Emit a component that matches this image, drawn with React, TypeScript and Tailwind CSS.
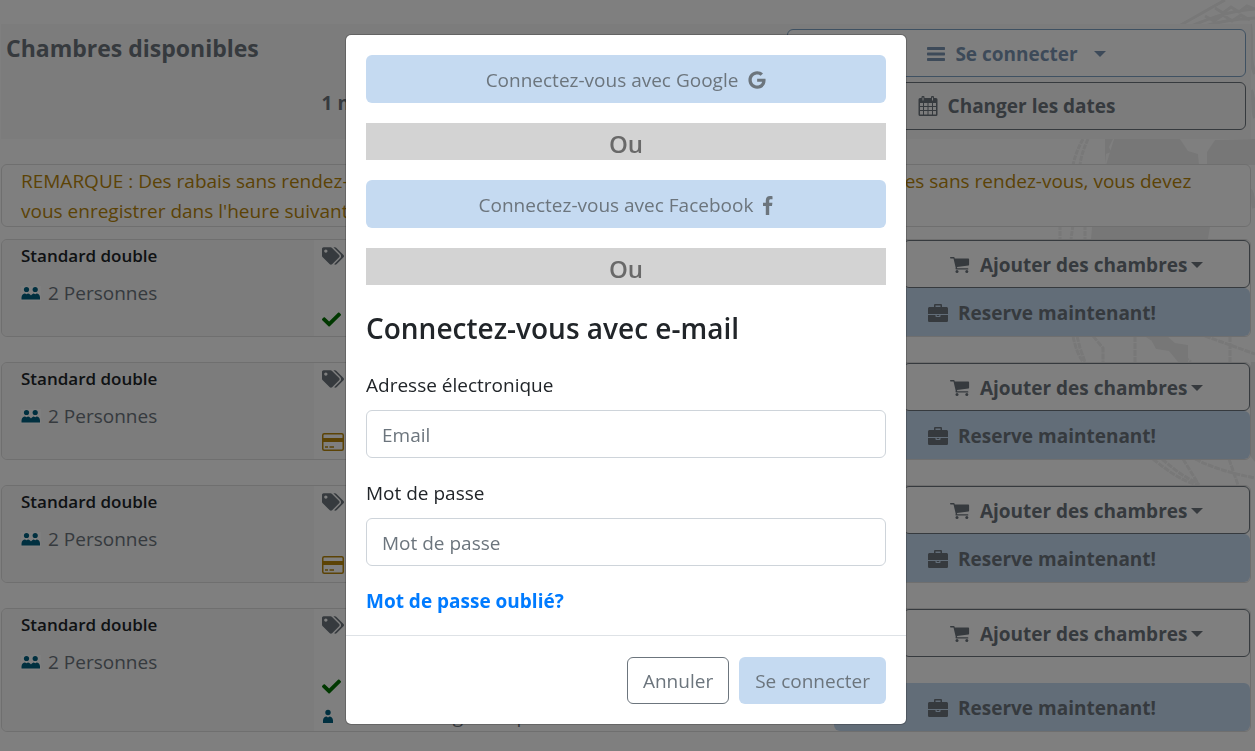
import { useState } from "react";
import type { ReactNode } from "react";
import { FaCheck, FaGoogle, FaTags } from "react-icons/fa";

type Room = {
  id: number;
  name: string;
  guests: number;
  policy: "free" | "card";
  note?: string;
};

const rooms: Room[] = [
  { id: 1, name: "Standard double", guests: 2, policy: "free" },
  { id: 2, name: "Standard double", guests: 2, policy: "card" },
  { id: 3, name: "Standard double", guests: 2, policy: "card" },
  { id: 4, name: "Standard double", guests: 2, policy: "free", note: "Lit d'enfant gratuit pour 1" },
];

export default function App() {
  return (
    <div className="relative min-h-screen overflow-hidden bg-white font-['Open_Sans','Noto_Sans',sans-serif] text-[19px] leading-[30px] text-[#212529]">
      <MapBackground />
      <main className="relative pt-6 pr-1 pb-5 pl-px">
        <PageHeader />
        <p className="mt-[25px] mb-3 rounded-md border border-[#dfdfdf] bg-white px-[19px] pt-px text-[#b8860b]">
          REMARQUE : Des rabais sans rendez-vous sont parfois offerts à la réception. Pour profiter des remises sans
          rendez-vous, vous devez vous enregistrer dans l'heure suivant la réservation.
        </p>
        <div className="flex flex-col gap-[25px]">
          {rooms.map((room) => (
            <RoomCard key={room.id} room={room} />
          ))}
        </div>
      </main>
      <LoginModal />
    </div>
  );
}

function PageHeader() {
  return (
    <header className="flex justify-between bg-[#f8f8f8] px-[5px] pt-[5px] pb-[9px] font-bold text-[#6c757d]">
      <div className="flex w-[686px] flex-col gap-[25px]">
        <h1 className="pt-1 text-[23px] leading-[30px]">Chambres disponibles</h1>
        <p className="text-center">1 nuit</p>
      </div>
      <div className="flex w-[459px] shrink-0 flex-col gap-[5px]">
        <button className="flex h-12 items-center justify-center rounded-md border border-[#7fa3c4] bg-white pt-0.5 text-[#7b95b3]">
          <BarsIcon className="mr-2.5 h-4 w-[18px]" />
          Se connecter
          <Caret className="ml-4" />
        </button>
        <button className="flex h-12 items-center justify-center rounded-md border border-[#6c757d]">
          <CalendarIcon className="mr-2.5 h-5 w-5" />
          Changer les dates
        </button>
      </div>
    </header>
  );
}

function RoomCard({ room }: { room: Room }) {
  return (
    <article className="grid grid-cols-12 rounded-md border border-[#dfdfdf] bg-white">
      <div className="col-span-3 rounded-l-md bg-[#f8f8f8] px-[19px] pt-px">
        <h2 className="text-[17px] leading-[30px] font-semibold">{room.name}</h2>
        <p className="mt-[7px] flex items-center gap-[7px] text-[#6c757d]">
          <PeopleIcon className="h-[15px] w-5" />
          {room.guests} Personnes
        </p>
      </div>
      <div className="col-span-5 flex flex-col justify-between px-2 pt-[5px]">
        <FaTags className="size-[22px] text-[#6c757d]" />
        <div>
          <div className="flex h-[34px] items-center">
            {room.policy === "free" ? (
              <FaCheck className="size-[19px] text-[#007000]" />
            ) : (
              <CardIcon className="h-[18px] w-[22px] text-[#b8860b]" />
            )}
          </div>
          {room.note && (
            <p className="flex h-7 items-center gap-3.5 pb-0.5 text-[#6c757d]">
              <PersonIcon className="h-[15px] w-3" />
              {room.note}
            </p>
          )}
        </div>
      </div>
      <div className="col-span-4 flex flex-col justify-between font-bold text-[#6c757d]">
        <button className="ml-auto flex h-12 w-5/6 items-center justify-center rounded-md border border-[#6c757d] bg-white pt-0.5">
          <CartIcon className="mr-2.5 h-4 w-5" />
          Ajouter des chambres
          <Caret className="ml-1" />
        </button>
        {room.note && <div className="h-[26px]" />}
        <button className="flex h-12 w-full items-center justify-center rounded-md bg-[#c5daf1] pt-0.5">
          <BriefcaseIcon className="mr-2.5 h-[18px] w-5" />
          Reserve maintenant!
        </button>
      </div>
    </article>
  );
}

function LoginModal() {
  const [email, setEmail] = useState("");
  const [password, setPassword] = useState("");

  return (
    <div className="fixed inset-0 flex items-start justify-center bg-black/50 pt-[34px] pr-[3px]">
      <div
        role="dialog"
        aria-modal="true"
        aria-labelledby="login-title"
        className="w-full max-w-[562px] rounded-md border border-black/20 bg-white bg-clip-padding"
      >
        <div className="px-5 pt-5 pb-[19px]">
          <SocialButton icon={<GoogleMark />}>Connectez-vous avec Google</SocialButton>
          <Divider />
          <SocialButton icon={<FacebookMark />}>Connectez-vous avec Facebook</SocialButton>
          <Divider />

          <h2 id="login-title" className="mb-6 pt-[5px] text-[28px] leading-9 font-semibold">
            Connectez-vous avec e-mail
          </h2>
          <label htmlFor="email" className="mb-2.5 block">
            Adresse électronique
          </label>
          <input
            id="email"
            type="email"
            placeholder="Email"
            value={email}
            onChange={(e) => setEmail(e.target.value)}
            className="mb-5 block h-12 w-full rounded-md border border-[#ced4da] px-[15px] pt-0.5 placeholder:text-[#6c757d]"
          />
          <label htmlFor="password" className="mb-2.5 block">
            Mot de passe
          </label>
          <input
            id="password"
            type="password"
            placeholder="Mot de passe"
            value={password}
            onChange={(e) => setPassword(e.target.value)}
            className="mb-5 block h-12 w-full rounded-md border border-[#ced4da] px-[15px] pt-0.5 placeholder:text-[#6c757d]"
          />
          <a href="#forgot" className="font-bold text-[#007bff]">
            Mot de passe oublié?
          </a>
        </div>
        <div className="flex justify-end gap-2.5 border-t border-[#dee2e6] px-5 pt-[21px] pb-5 text-[#6c757d]">
          <button className="h-[47px] rounded-md border border-[#6c757d] px-[15px]">Annuler</button>
          <button className="h-[47px] rounded-md bg-[#c5daf1] px-4">Se connecter</button>
        </div>
      </div>
    </div>
  );
}

function SocialButton({ icon, children }: { icon: ReactNode; children: ReactNode }) {
  return (
    <button className="flex h-12 w-full items-center justify-center gap-2.5 rounded-md bg-[#c5daf1] pt-0.5 text-[#6c757d]">
      {children}
      {icon}
    </button>
  );
}

function Divider() {
  return (
    <div className="my-5 bg-[#d3d3d3] pt-1 text-center text-[24px] leading-[33px] font-semibold text-[#696969]">Ou</div>
  );
}

/* Icons */

type IconProps = { className?: string };

function GoogleMark() {
  return <FaGoogle className="size-[18px]" aria-hidden="true" />;
}

function FacebookMark() {
  return (
    <svg viewBox="0 0 10 19" className="h-[19px] w-2.5" fill="currentColor" aria-hidden="true">
      <path d="M9.500.2v3H7.800C6.500 3.200 6.200 3.800 6.200 4.700v2h3.200l-.4 3.300H6.200V19H2.800v-9H0V6.700h2.800V4.300C2.800 1.500 4.500 0 7 0c1.200 0 2.200.1 2.500.2z" />
    </svg>
  );
}

function BarsIcon({ className }: IconProps) {
  return (
    <svg viewBox="0 0 18 16" className={className} fill="currentColor" aria-hidden="true">
      <rect y="1" width="18" height="3" rx=".7" />
      <rect y="6.500" width="18" height="3" rx=".7" />
      <rect y="12" width="18" height="3" rx=".7" />
    </svg>
  );
}

function CartIcon({ className }: IconProps) {
  return (
    <svg viewBox="0 0 20 16" className={className} fill="currentColor" aria-hidden="true">
      <path d="M.7 0h3c.5 0 .8.300.9.800L4.800 1.500H18.400c.4 0 .7.300.7.700v5.600c0 .4-.3.700-.6.700L7 9.900l.2 1.300h10.500a.7.7 0 0 1 0 1.400H6.200a.7.7 0 0 1-.7-.8l.2-1.100L3.500 1.400H.7A.7.7 0 0 1 .7 0z" />
      <circle cx="7" cy="14.400" r="1.500" />
      <circle cx="16.800" cy="14.400" r="1.500" />
    </svg>
  );
}

function BriefcaseIcon({ className }: IconProps) {
  return (
    <svg viewBox="0 0 20 18" className={className} fill="currentColor" aria-hidden="true">
      <path
        fillRule="evenodd"
        d="M6 3V1.200C6 .500 6.500 0 7.200 0h5.600c.7 0 1.200.5 1.200 1.200V3h4.400C19.300 3 20 3.700 20 4.600V10H0V4.600C0 3.700.7 3 1.600 3zm1.500 0h5V1.400h-5z"
      />
      <path d="M0 11h7.500v1.200c0 .5.300.8.800.8h3.400c.5 0 .8-.3.800-.8V11H20v5.400c0 .9-.7 1.600-1.600 1.600H1.600C.7 18 0 17.300 0 16.400z" />
      <path d="M8.700 11h2.600v1H8.700z" />
    </svg>
  );
}

function Caret({ className = "" }: IconProps) {
  return (
    <svg viewBox="0 0 12 6" className={`h-1.5 w-3 ${className}`} fill="currentColor" aria-hidden="true">
      <path d="M0 0h12L6 6z" />
    </svg>
  );
}

function CalendarIcon({ className }: IconProps) {
  return (
    <svg viewBox="0 0 20 20" className={className} fill="currentColor" aria-hidden="true">
      <path
        fillRule="evenodd"
        d="M2 2h1.500V1a1 1 0 0 1 1-1h1a1 1 0 0 1 1 1v1h6.500V1a1 1 0 0 1 1-1h1a1 1 0 0 1 1 1v1H18a1.500 1.500 0 0 1 1.500 1.500v15A1.500 1.500 0 0 1 18 20H2a1.500 1.500 0 0 1-1.500-1.500v-15A1.500 1.500 0 0 1 2 2zM2 7v3h3V7zm4 0v3h3.500V7zm4.500 0v3H14V7zM15 7v3h3V7zM2 11v3h3v-3zm4 0v3h3.500v-3zm4.500 0v3H14v-3zm4.500 0v3h3v-3zM2 15v3.500h3V15zm4 0v3.500h3.500V15zm4.500 0v3.500H14V15zm4.500 0v3.500h3V15zM4.500 1.500v3h1v-3zm9.500 0v3h1v-3z"
      />
    </svg>
  );
}

function CardIcon({ className }: IconProps) {
  return (
    <svg viewBox="0 0 22 18" className={className} fill="none" stroke="currentColor" aria-hidden="true">
      <rect x=".75" y=".75" width="20.500" height="16.500" rx="1.500" strokeWidth="1.500" />
      <path d="M1 7h20" strokeWidth="4" />
      <path d="M3 14h3m1.500 0H12" strokeWidth="1.500" />
    </svg>
  );
}

function PersonIcon({ className }: IconProps) {
  return (
    <svg viewBox="0 0 12 15" className={className} fill="#006080" aria-hidden="true">
      <circle cx="6" cy="3.500" r="2.700" />
      <path d="M1 14v-2.500C1 9 3 7.500 4.500 7.500L6 8.500l1.500-1C9 7.500 11 9 11 11.500V14z" />
    </svg>
  );
}

function PeopleIcon({ className }: IconProps) {
  return (
    <svg viewBox="0 0 20 15" className={className} fill="#006080" aria-hidden="true">
      <rect width="20" height="15" fill="#fff" />
      <circle cx="5.500" cy="3.500" r="2.600" />
      <circle cx="14.200" cy="3.500" r="2.600" />
      <path d="M.5 13.500V11.500c0-2.500 2-4 3.500-4l1.500.7 1.500-.7c1.300 0 2.300 1 3 2 .7-1 1.700-2 2.700-2l1.500.7 1.500-.7c1.500 0 3.300 1.500 3.300 4v2z" />
    </svg>
  );
}

/* Faded world map behind the list */
function MapBackground() {
  return (
    <svg
      viewBox="0 0 200 500"
      className="absolute top-0 right-0 h-[500px] w-[200px]"
      fill="none"
      stroke="#f0f0f0"
      strokeWidth="3"
      aria-hidden="true"
    >
      <path d="M124 26 170 0M136 26c18-7 32-14 64-17M150 26c16-5 30-7 50-8M160 8l8 5 8-6 8 5 8-6 8 3M150 16l9 5 9-6 9 6 9-6 9 5" />
      <path d="M50 139h8l-4 8 2 5-5 2-1 11zM59 139h66l8 12 10 3 1 11h8v-13l8-12 40-1v26H51zM37 227h118l-2 12H36z" fill="#efefef" stroke="none" />
      <path d="M28 139c-5 9-8 17-10 26M33 139c-4 9-7 17-8 26M5 225v14M18 225l-2 14M30 225v14" strokeDasharray="5 1" />
      <path d="M195 24c3 20-2 35 5 50M196 90c4 9 1 20 4 28M195 190c4 5 2 12 4 18" strokeWidth="4" />
      <path d="M18 336c2 10 5 19 10 26M22 336l3 12 5 14M38 336l10 12v14M80 336v26M92 336c18 12 34 18 44 26M150 336l50 18M175 336v26" strokeDasharray="6 1" />
      <path d="M94 336h18l8 7 13 2v17h-10l-9-11-13-2z" fill="#efefef" stroke="none" />
      <path d="M98 459c14 11 28 22 45 26M107 459c14 12 25 20 36 24M128 459l16 26M140 459c20 10 40 15 60 19M174 459l9 26" strokeDasharray="6 1" />
      <path d="M196 362h4v100l-4-5z" fill="#efefef" stroke="none" />
    </svg>
  );
}
